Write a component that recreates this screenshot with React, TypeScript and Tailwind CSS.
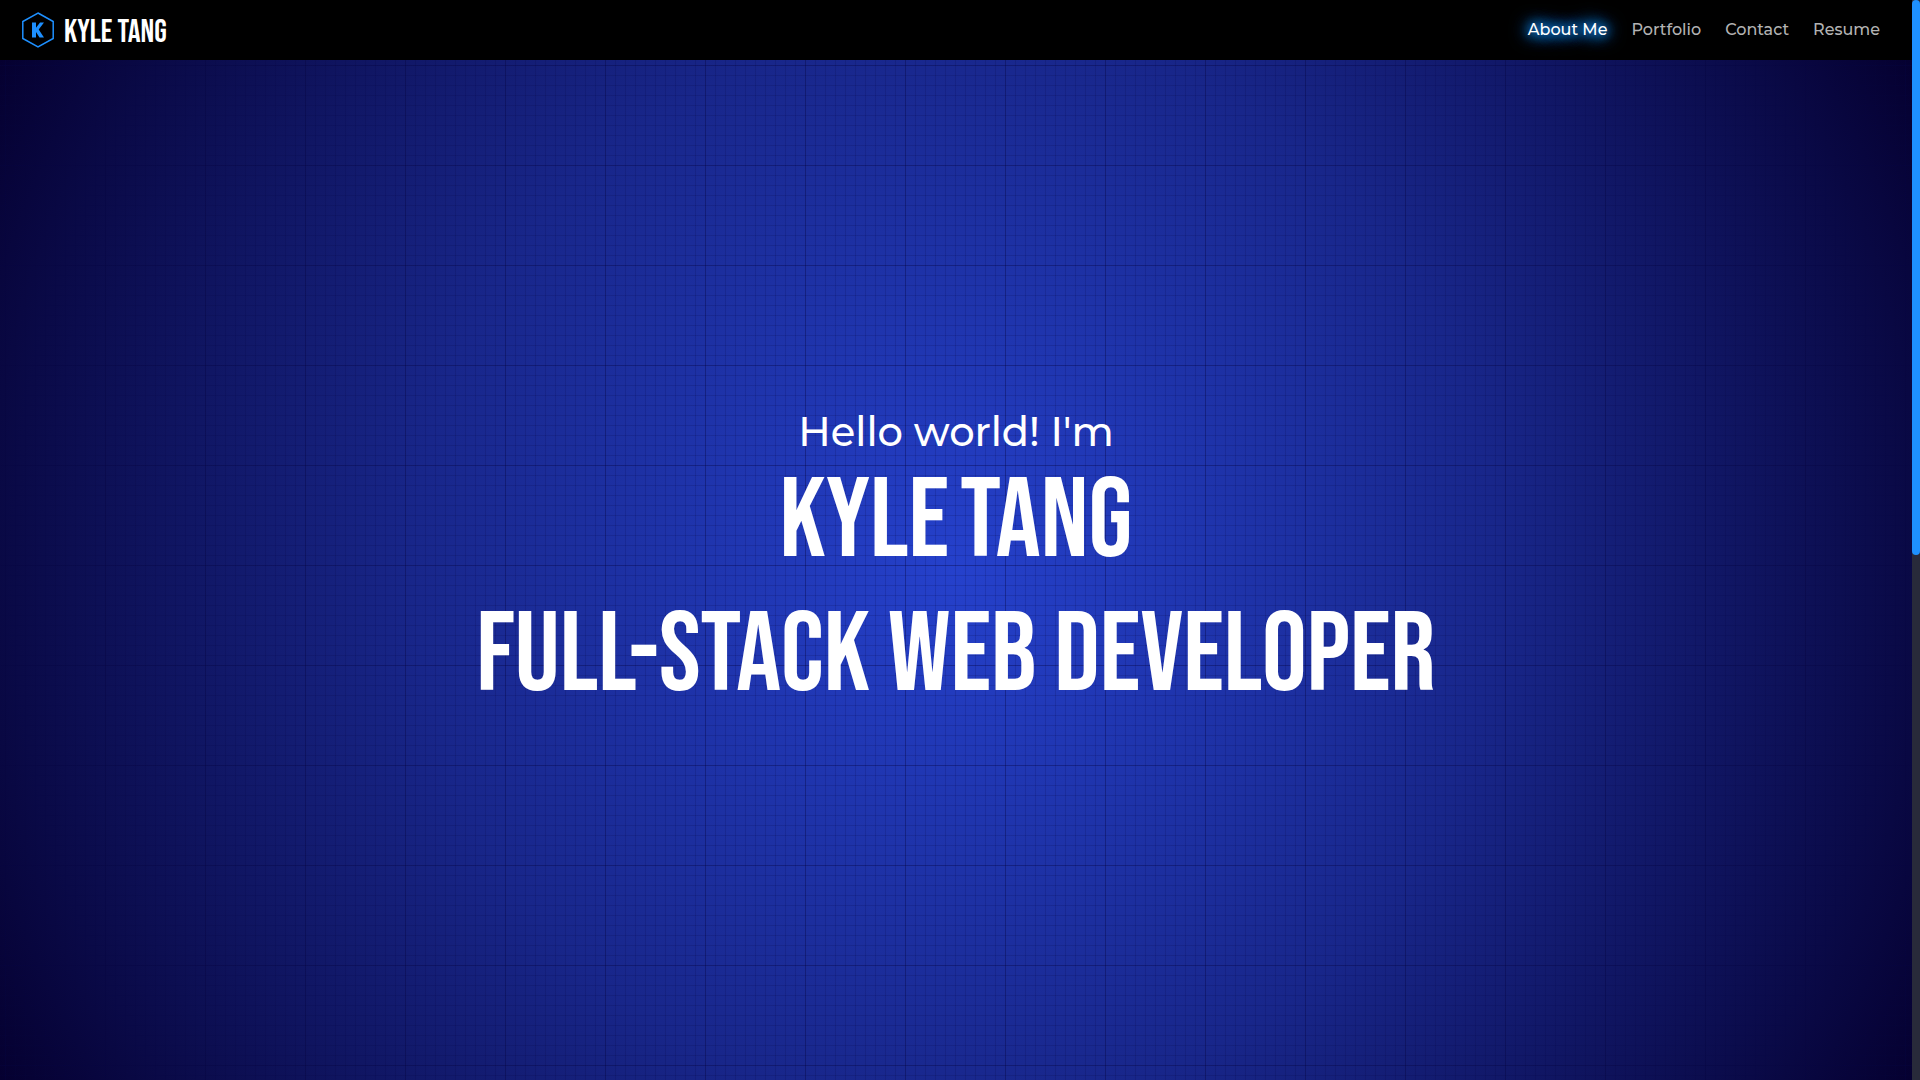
const links = [
  { label: 'About Me', href: '#about', active: true },
  { label: 'Portfolio', href: '#portfolio', active: false },
  { label: 'Contact', href: '#contact', active: false },
  { label: 'Resume', href: '#resume', active: false },
];

function Logo() {
  return (
    <svg className="h-9 w-8" viewBox="0 0 32 36" fill="none" aria-hidden="true">
      <path d="M16 1 31.200 9.500V26.500L16 35 .8 26.500V9.500Z" stroke="#1e90ff" strokeWidth="1.500" />
      <path d="M10 10.500h4v5.300l4-5.300h4l-5.300 7 5.300 8h-4.500l-3.500-5.500V25.500h-4Z" fill="#1e90ff" />
    </svg>
  );
}

function Header() {
  return (
    <header className="flex h-15 items-center justify-between bg-black px-8 pl-[22px]">
      <a href="#home" className="flex items-center gap-[10px] text-white">
        <Logo />
        <span className="pt-1.5 font-['Bebas_Neue',sans-serif] text-[32px] leading-8">KYLE TANG</span>
      </a>
      <nav className="flex gap-6 text-base font-medium">
        {links.map((link) => (
          <a
            key={link.label}
            href={link.href}
            className={
              link.active
                ? 'text-white [text-shadow:0_0_10px_#1e90ff,0_0_15px_#1e90ff,0_0_20px_#1e90ff,0_0_20px_#1e90ff]'
                : 'text-[#b3b3b3]'
            }
          >
            {link.label}
          </a>
        ))}
      </nav>
    </header>
  );
}

function Hero() {
  return (
    <section className="grid flex-1 bg-[radial-gradient(circle,#2541cc_0%,#18268a_50%,#050030_100%)]">
      <div className="flex flex-col items-center justify-center bg-[linear-gradient(#06044040_1px,transparent_1px),linear-gradient(90deg,#06044040_1px,transparent_1px),linear-gradient(#06044029_1px,transparent_1px),linear-gradient(90deg,#06044029_1px,transparent_1px)] bg-[size:100px_100px,100px_100px,10px_10px,10px_10px] bg-[position:5px_5px] px-4 pb-1.5 text-center text-white">
        <p className="mb-[2px] text-[40px] leading-11 font-medium">Hello world! I'm</p>
        <h1 className="font-['Bebas_Neue',sans-serif] text-[112px] leading-[134px]">
          <span className="flex justify-center gap-[11px]">
            <span>KYLE</span> <span>TANG</span>
          </span>
          <span className="block">FULL-STACK WEB DEVELOPER</span>
        </h1>
      </div>
    </section>
  );
}

export default function App() {
  return (
    <div className="flex h-screen font-['Montserrat',sans-serif]">
      <div className="flex flex-1 flex-col">
        <Header />
        <Hero />
      </div>
      <div className="w-2 bg-[#282a3a]">
        <div className="h-[51.4%] rounded-full bg-[#1e90ff]" />
      </div>
    </div>
  );
}
